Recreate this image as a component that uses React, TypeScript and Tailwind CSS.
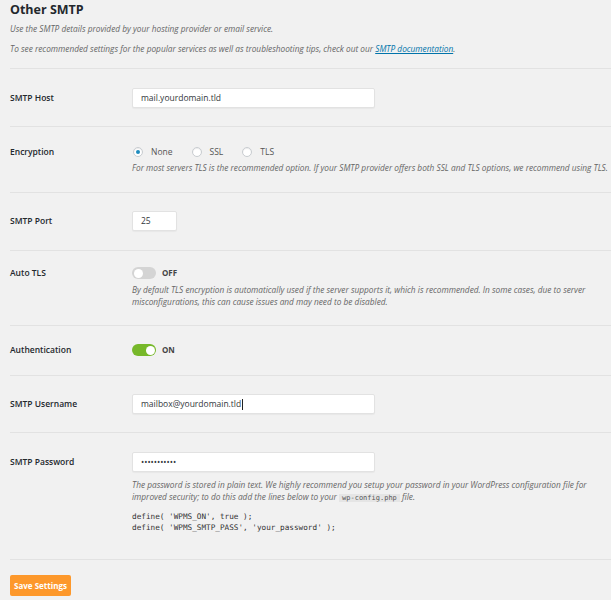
import React from "react";

const font = { fontFamily: '"Open Sans", "Noto Sans", sans-serif' };
const mono = { fontFamily: '"DejaVu Sans Mono", "Liberation Mono", monospace' };

function Label({ children, mt }: { children: React.ReactNode; mt: string }) {
  return (
    <div className={`w-[122px] shrink-0 text-[8.5px] font-semibold text-[#23282d] ${mt}`}>{children}</div>
  );
}

function Radio({ checked, label }: { checked?: boolean; label: string }) {
  return (
    <div className="flex items-center">
      <span className="w-[10px] h-[10px] rounded-full bg-white border border-[#c8ccd0] flex items-center justify-center shadow-[inset_0_1px_1px_rgba(0,0,0,0.08)]">
        {checked && <span className="w-[4px] h-[4px] rounded-full bg-[#1e8cbe]" />}
      </span>
      <span className="ml-[8px] text-[8.5px] text-[#555]">{label}</span>
    </div>
  );
}

function Toggle({ on }: { on?: boolean }) {
  return (
    <div className="flex items-center h-[12px]">
      <span
        className={`w-[24px] h-[12px] rounded-full flex items-center px-[1.5px] ${
          on ? "bg-[#77b82a] justify-end" : "bg-[#d4d4d4] justify-start"
        }`}
      >
        <span className="w-[9px] h-[9px] rounded-full bg-white" />
      </span>
      <span className="ml-[6px] text-[8px] font-bold text-[#444]">{on ? "ON" : "OFF"}</span>
    </div>
  );
}

function Input({ value, w, caret }: { value: string; w: string; caret?: boolean }) {
  return (
    <div className={`${w} h-[20px] bg-white border border-[#e2e2e2] rounded-[2px] shadow-[0_1px_1px_rgba(0,0,0,0.04)] flex items-center pl-[8px] text-[8.5px] text-[#32373c]`}>
      {value}
      {caret && <span className="inline-block w-[1px] h-[11px] bg-[#222] ml-[1px]" />}
    </div>
  );
}

export default function App() {
  return (
    <div className="w-[611px] h-[600px] bg-[#f1f1f1] pl-[10px] overflow-hidden" style={font}>
      <div className="text-[12.5px] font-bold leading-[20px] text-[#23282d]">Other SMTP</div>
      <div className="mt-[3px] text-[8.3px] italic leading-[12px] text-[#666]">
        Use the SMTP details provided by your hosting provider or email service.
      </div>
      <div className="mt-[8px] text-[8.3px] italic leading-[12px] text-[#666]">
        To see recommended settings for the popular services as well as troubleshooting tips, check out our{" "}
        <span className="text-[#0073aa] underline">SMTP documentation</span>.
      </div>

      <div className="mt-[13px] border-t border-[#e2e2e2]" />

      {/* SMTP Host */}
      <div className="flex pt-[19px] pb-[18px] border-b border-[#e2e2e2]">
        <Label mt="leading-[20px]">SMTP Host</Label>
        <Input value="mail.yourdomain.tld" w="w-[243px]" />
      </div>

      {/* Encryption */}
      <div className="flex pt-[17px] pb-[18px] border-b border-[#e2e2e2]">
        <Label mt="leading-[16px]">Encryption</Label>
        <div className="flex flex-col">
          <div className="flex items-center h-[16px] gap-[19px] pl-[1px]">
            <Radio checked label="None" />
            <Radio label="SSL" />
            <Radio label="TLS" />
          </div>
          <div className="mt-[2px] text-[8.3px] italic leading-[12px] text-[#666] whitespace-nowrap">
            For most servers TLS is the recommended option. If your SMTP provider offers both SSL and TLS options, we recommend using TLS.
          </div>
        </div>
      </div>

      {/* SMTP Port */}
      <div className="flex pt-[18px] pb-[19px] border-b border-[#e2e2e2]">
        <Label mt="leading-[20px]">SMTP Port</Label>
        <Input value="25" w="w-[45px]" />
      </div>

      {/* Auto TLS */}
      <div className="flex pt-[16px] pb-[17px] border-b border-[#e2e2e2]">
        <Label mt="leading-[12px]">Auto TLS</Label>
        <div className="flex flex-col">
          <Toggle />
          <div className="mt-[5px] w-[478px] text-[8.3px] italic leading-[12px] text-[#666]">
            By default TLS encryption is automatically used if the server supports it, which is recommended. In some cases, due to server misconfigurations, this can cause issues and may need to be disabled.
          </div>
        </div>
      </div>

      {/* Authentication */}
      <div className="flex pt-[18px] pb-[19px] border-b border-[#e2e2e2]">
        <Label mt="leading-[12px]">Authentication</Label>
        <Toggle on />
      </div>

      {/* SMTP Username */}
      <div className="flex pt-[18px] pb-[18px] border-b border-[#e2e2e2]">
        <Label mt="leading-[20px]">SMTP Username</Label>
        <Input value="mailbox@yourdomain.tld" w="w-[243px]" caret />
      </div>

      {/* SMTP Password */}
      <div className="flex pt-[19px] pb-[26px] border-b border-[#e2e2e2]">
        <Label mt="leading-[20px]">SMTP Password</Label>
        <div className="flex flex-col">
          <Input value="•••••••••••" w="w-[243px]" />
          <div className="mt-[7px] w-[478px] text-[8.3px] italic leading-[12px] text-[#666]">
            The password is stored in plain text. We highly recommend you setup your password in your WordPress configuration file for improved security; to do this add the lines below to your{" "}
            <code className="not-italic bg-[#e5e5e5] px-[3px] text-[7px] text-[#555]" style={mono}>
              wp-config.php
            </code>{" "}
            file.
          </div>
          <pre className="mt-[7px] text-[7.7px] leading-[11px] text-[#333]" style={mono}>
{`define( 'WPMS_ON', true );
define( 'WPMS_SMTP_PASS', 'your_password' );`}
          </pre>
        </div>
      </div>

      <button className="mt-[15px] w-[61px] h-[21px] rounded-[2px] bg-[#fd982b] text-white text-[8px] font-bold">
        Save Settings
      </button>
    </div>
  );
}
